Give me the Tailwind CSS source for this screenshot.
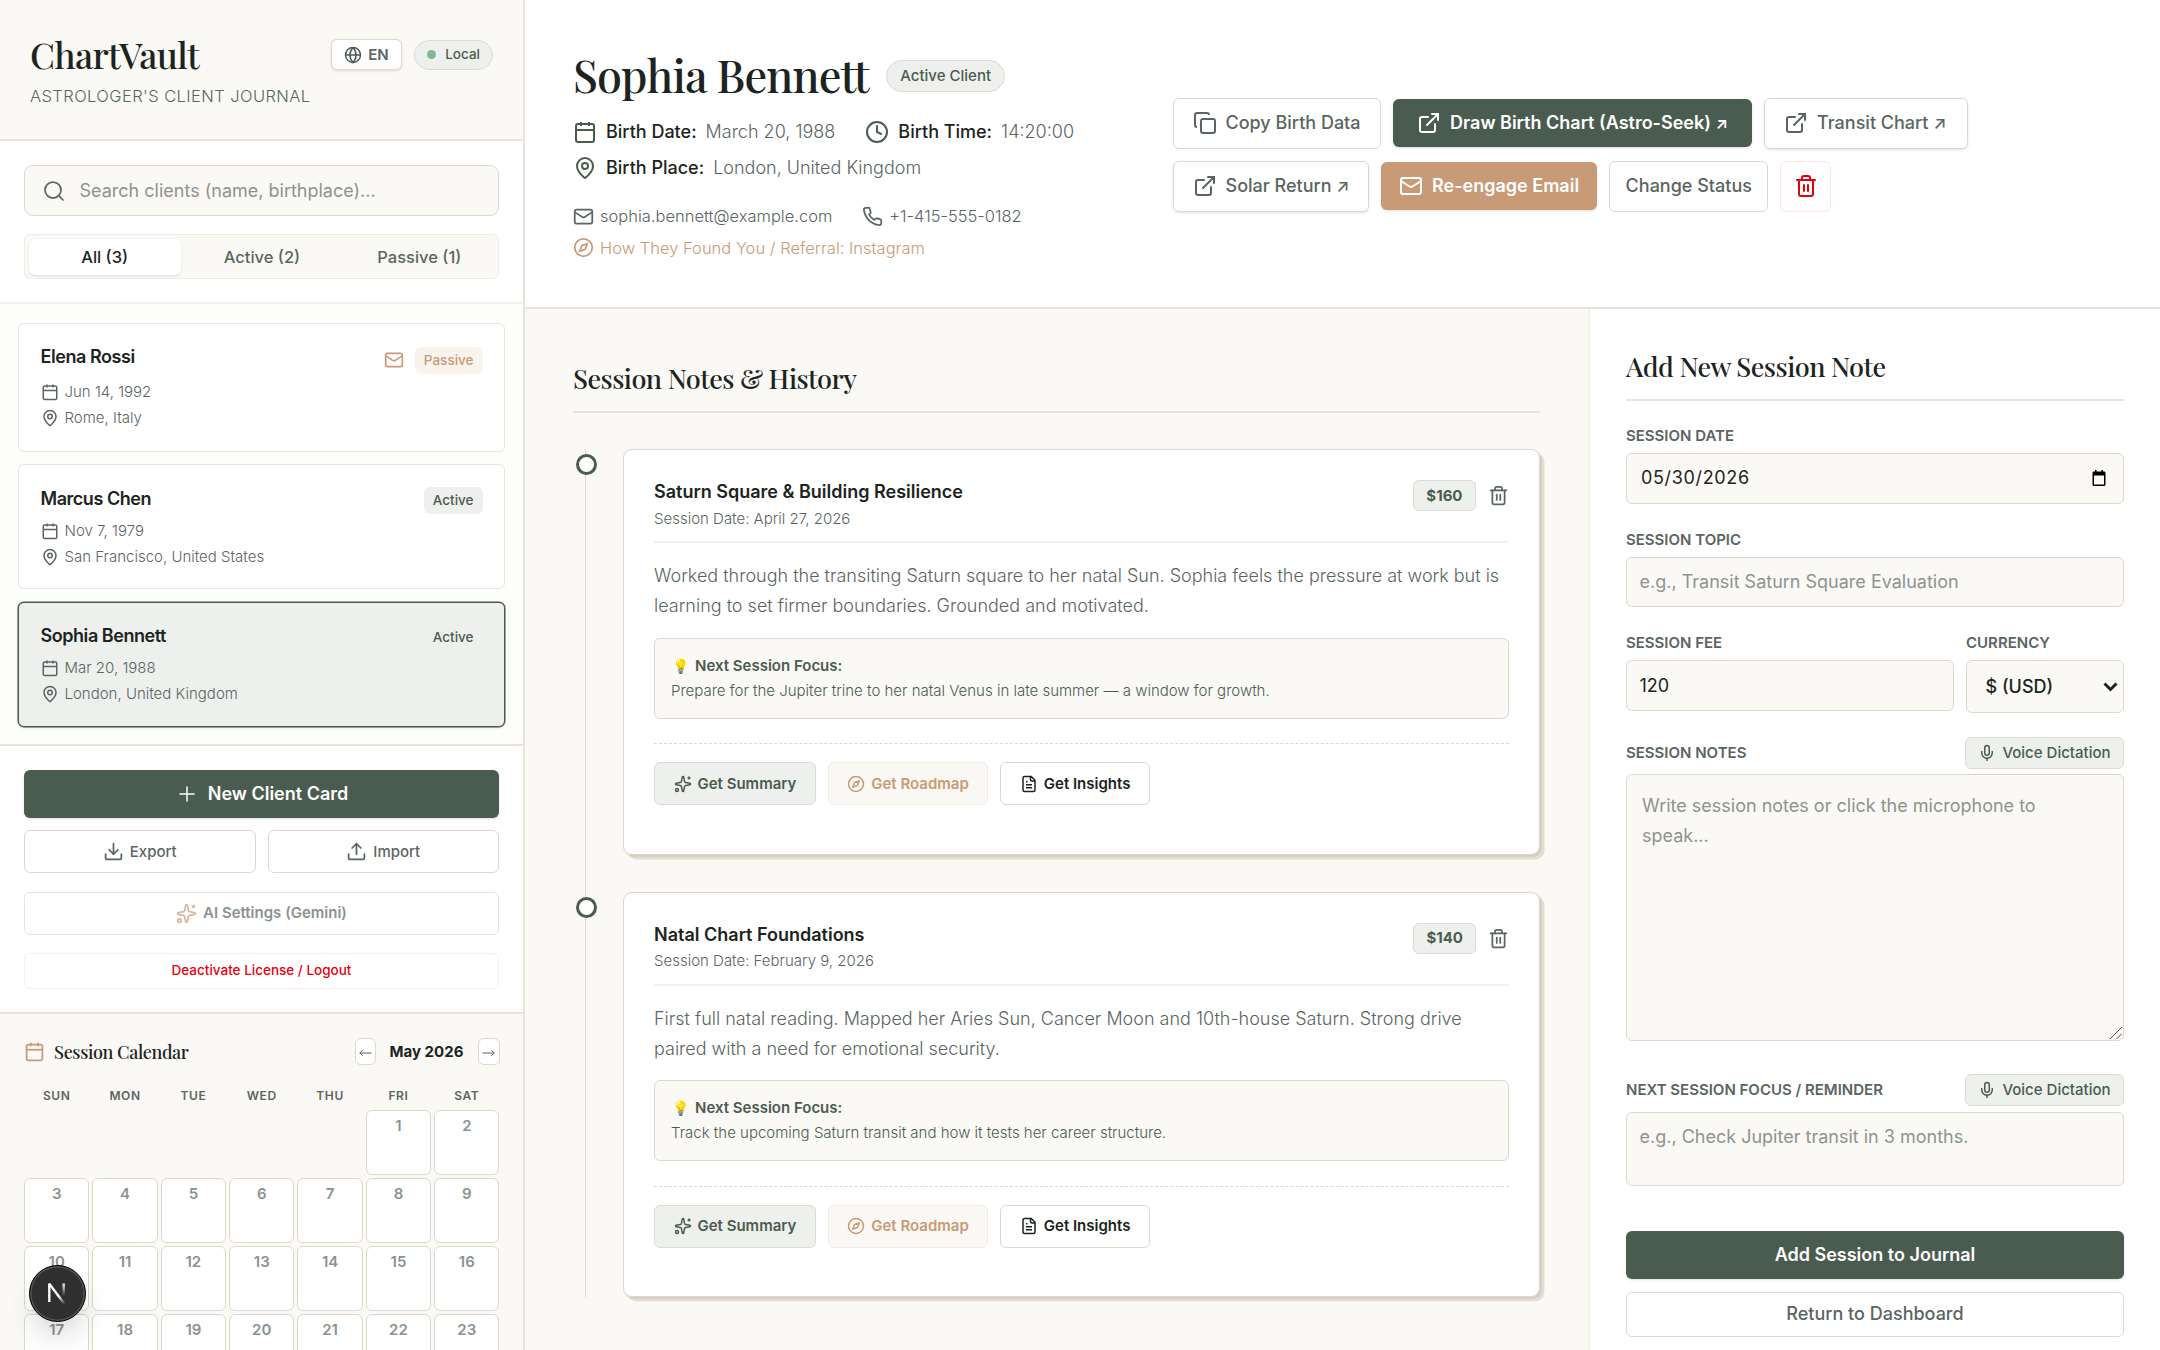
<!DOCTYPE html>
<html lang="en" class="text-[24px]">
<head>
    <meta charset="UTF-8">
    <meta name="viewport" content="width=device-width, initial-scale=1.0">
    <title>ChartVault - Astrologer's Client Journal</title>
    <script src="https://cdn.jsdelivr.net/npm/@tailwindcss/browser@4"></script>
</head>
<body class="h-[1350px] overflow-hidden bg-[#faf9f6] font-['Inter',sans-serif] text-xs text-[#1c2421]">

    <!-- icon set -->
    <svg class="hidden">
        <symbol id="globe" viewBox="0 0 24 24"><circle cx="12" cy="12" r="10"/><path d="M12 2a14.5 14.5 0 0 0 0 20 14.5 14.5 0 0 0 0-20"/><path d="M2 12h20"/></symbol>
        <symbol id="search" viewBox="0 0 24 24"><circle cx="11" cy="11" r="8"/><path d="m21 21-4.3-4.3"/></symbol>
        <symbol id="calendar" viewBox="0 0 24 24"><path d="M8 2v4"/><path d="M16 2v4"/><rect width="18" height="18" x="3" y="4" rx="2"/><path d="M3 10h18"/></symbol>
        <symbol id="pin" viewBox="0 0 24 24"><path d="M20 10c0 4.993-5.539 10.193-7.399 11.799a1 1 0 0 1-1.202 0C9.539 20.193 4 14.993 4 10a8 8 0 0 1 16 0"/><circle cx="12" cy="10" r="3"/></symbol>
        <symbol id="mail" viewBox="0 0 24 24"><path d="m22 7-8.991 5.727a2 2 0 0 1-2.009 0L2 7"/><rect x="2" y="4" width="20" height="16" rx="2"/></symbol>
        <symbol id="plus" viewBox="0 0 24 24"><path d="M5 12h14"/><path d="M12 5v14"/></symbol>
        <symbol id="download" viewBox="0 0 24 24"><path d="M12 15V3"/><path d="M21 15v4a2 2 0 0 1-2 2H5a2 2 0 0 1-2-2v-4"/><path d="m7 10 5 5 5-5"/></symbol>
        <symbol id="upload" viewBox="0 0 24 24"><path d="M12 3v12"/><path d="m17 8-5-5-5 5"/><path d="M21 15v4a2 2 0 0 1-2 2H5a2 2 0 0 1-2-2v-4"/></symbol>
        <symbol id="sparkles" viewBox="0 0 24 24"><path d="M11.017 2.814a1 1 0 0 1 1.966 0l1.051 5.558a2 2 0 0 0 1.594 1.594l5.558 1.051a1 1 0 0 1 0 1.966l-5.558 1.051a2 2 0 0 0-1.594 1.594l-1.051 5.558a1 1 0 0 1-1.966 0l-1.051-5.558a2 2 0 0 0-1.594-1.594l-5.558-1.051a1 1 0 0 1 0-1.966l5.558-1.051a2 2 0 0 0 1.594-1.594z"/><path d="M20 2v4"/><path d="M22 4h-4"/><circle cx="4" cy="20" r="2"/></symbol>
        <symbol id="clock" viewBox="0 0 24 24"><circle cx="12" cy="12" r="10"/><path d="M12 6v6l4 2"/></symbol>
        <symbol id="phone" viewBox="0 0 24 24"><path d="M22 16.92v3a2 2 0 0 1-2.18 2 19.79 19.79 0 0 1-8.63-3.07 19.5 19.5 0 0 1-6-6 19.79 19.79 0 0 1-3.07-8.67A2 2 0 0 1 4.11 2h3a2 2 0 0 1 2 1.72 12.84 12.84 0 0 0 .7 2.81 2 2 0 0 1-.45 2.11L8.09 9.91a16 16 0 0 0 6 6l1.27-1.27a2 2 0 0 1 2.11-.45 12.84 12.84 0 0 0 2.81.7A2 2 0 0 1 22 16.92z"/></symbol>
        <symbol id="compass" viewBox="0 0 24 24"><path d="m16.24 7.76-1.804 5.411a2 2 0 0 1-1.265 1.265L7.76 16.24l1.804-5.411a2 2 0 0 1 1.265-1.265z"/><circle cx="12" cy="12" r="10"/></symbol>
        <symbol id="copy" viewBox="0 0 24 24"><rect width="14" height="14" x="8" y="8" rx="2"/><path d="M4 16c-1.1 0-2-.9-2-2V4c0-1.1.9-2 2-2h10c1.1 0 2 .9 2 2"/></symbol>
        <symbol id="external" viewBox="0 0 24 24"><path d="M15 3h6v6"/><path d="M10 14 21 3"/><path d="M18 13v6a2 2 0 0 1-2 2H5a2 2 0 0 1-2-2V8a2 2 0 0 1 2-2h6"/></symbol>
        <symbol id="trash" viewBox="0 0 24 24"><path d="M10 11v6"/><path d="M14 11v6"/><path d="M19 6v14a2 2 0 0 1-2 2H7a2 2 0 0 1-2-2V6"/><path d="M3 6h18"/><path d="M8 6V4a2 2 0 0 1 2-2h4a2 2 0 0 1 2 2v2"/></symbol>
        <symbol id="file" viewBox="0 0 24 24"><path d="M15 2H6a2 2 0 0 0-2 2v16a2 2 0 0 0 2 2h12a2 2 0 0 0 2-2V7Z"/><path d="M14 2v4a2 2 0 0 0 2 2h4"/><path d="M10 9H8"/><path d="M16 13H8"/><path d="M16 17H8"/></symbol>
        <symbol id="mic" viewBox="0 0 24 24"><path d="M12 19v3"/><path d="M19 10v2a7 7 0 0 1-14 0v-2"/><rect x="9" y="2" width="6" height="13" rx="3"/></symbol>
    </svg>

    <div class="flex h-full">

        <!-- Sidebar -->
        <aside class="flex h-full w-[525px] shrink-0 flex-col overflow-hidden border-r-2 border-[#e8e4da] bg-white">

            <div class="h-[141px] shrink-0 border-b-2 border-[#e8e4da] bg-[#faf9f6] px-[30px] pt-[30px]">
                <div class="flex h-[48px] items-center justify-between">
                    <h1 class="font-['Playfair_Display','Liberation_Serif',serif] text-[36px] leading-[48px] font-medium tracking-[-0.02em]">ChartVault</h1>
                    <div class="mt-[1px] flex items-center gap-[12px]">
                        <button class="flex h-[31.5px] items-center gap-[6px] rounded border border-[#ddd8cb] bg-white px-[12.5px] text-[15px] font-semibold text-[#5a6562] shadow-sm">
                            <svg class="h-[18px] w-[18px] fill-none stroke-[#4a5c4f] stroke-2"><use href="#globe"/></svg>EN
                        </button>
                        <span class="flex h-[30px] items-center gap-[9px] rounded-full border border-[#dcdbd3] bg-[#eef0ed] px-[12px] text-[13.5px] font-medium text-[#4a5c4f]">
                            <span class="h-[9px] w-[9px] rounded-full bg-[#7fb896]"></span>Local
                        </span>
                    </div>
                </div>
                <p class="mt-[6px] text-[16.5px] leading-[24px] font-light tracking-wide text-[#5a6562]">ASTROLOGER'S CLIENT JOURNAL</p>
            </div>

            <div class="h-[163px] shrink-0 border-b-2 border-[#f3f1eb] p-[24px]">
                <div class="flex h-[51px] items-center rounded-[9px] border border-[#ddd8cb] bg-[#faf9f6] pl-[17px]">
                    <svg class="h-[24px] w-[24px] fill-none stroke-[#5a6562] stroke-[1.75]" stroke-linecap="round"><use href="#search"/></svg>
                    <input type="text" placeholder="Search clients (name, birthplace)..." class="ml-[13.5px] w-[380px] text-xs outline-none placeholder:text-[#8e9390]">
                </div>
                <div class="mt-[18px] grid h-[45px] grid-cols-3 gap-[5px] rounded border border-[#efece4] bg-[#faf9f6] p-[3.5px] pr-[2.5px] text-[16.5px] font-medium text-[#5a6562]">
                    <button class="rounded bg-white text-[#1c2421] shadow-sm">All (3)</button>
                    <button>Active (2)</button>
                    <button>Passive (1)</button>
                </div>
            </div>

            <!-- Client list -->
            <div class="flex h-[441.5px] shrink-0 flex-col gap-[12.5px] border-b-2 border-[#e8e4da] bg-[#fdfdfb] px-[18px] pt-[19px] text-[15px] leading-[22.5px] font-light text-[#5a6562]">
                <div class="rounded border border-[#e9e5db] bg-white p-[21.5px] pt-[21px]">
                    <div class="flex h-[30px] items-start justify-between">
                        <h3 class="text-xs leading-[24px] font-semibold tracking-tight text-[#1c2421]">Elena Rossi</h3>
                        <div class="flex h-full items-center gap-[10.5px]">
                            <svg class="h-[20px] w-[20px] fill-none stroke-[#c99a76] stroke-2"><use href="#mail"/></svg>
                            <span class="flex h-[27px] items-center rounded bg-[#f9f3ee] px-[9px] text-[13.5px] font-medium text-[#c99a76]">Passive</span>
                        </div>
                    </div>
                    <div class="mt-[6px] flex items-center gap-[6px]"><svg class="h-[18px] w-[18px] fill-none stroke-current stroke-2"><use href="#calendar"/></svg>Jun 14, 1992</div>
                    <div class="mt-[3px] flex items-center gap-[6px]"><svg class="h-[18px] w-[18px] fill-none stroke-current stroke-2"><use href="#pin"/></svg>Rome, Italy</div>
                </div>
                <div class="rounded border border-[#e9e5db] bg-white p-[21.5px] pb-[20px]">
                    <div class="flex h-[27px] items-start justify-between">
                        <h3 class="text-xs leading-[24px] font-semibold tracking-tight text-[#1c2421]">Marcus Chen</h3>
                        <span class="flex h-[27px] items-center rounded bg-[#eef0ed] px-[9px] text-[13.5px] font-medium text-[#4a5c4f]">Active</span>
                    </div>
                    <div class="mt-[6.5px] flex items-center gap-[6px]"><svg class="h-[18px] w-[18px] fill-none stroke-current stroke-2"><use href="#calendar"/></svg>Nov 7, 1979</div>
                    <div class="mt-[3px] flex items-center gap-[6px]"><svg class="h-[18px] w-[18px] fill-none stroke-current stroke-2"><use href="#pin"/></svg>San Francisco, United States</div>
                </div>
                <div class="rounded border border-[#4a5c4f] bg-[#eef0ed] p-[21.5px] pb-[20.5px] shadow-sm ring-[0.5px] ring-[#4a5c4f]">
                    <div class="flex h-[27px] items-start justify-between">
                        <h3 class="text-xs leading-[24px] font-semibold tracking-tight text-[#1c2421]">Sophia Bennett</h3>
                        <span class="flex h-[27px] items-center rounded bg-[#eef0ed] px-[9px] text-[13.5px] font-medium text-[#4a5c4f]">Active</span>
                    </div>
                    <div class="mt-[6px] flex items-center gap-[6px]"><svg class="h-[18px] w-[18px] fill-none stroke-current stroke-2"><use href="#calendar"/></svg>Mar 20, 1988</div>
                    <div class="mt-[3px] flex items-center gap-[6px]"><svg class="h-[18px] w-[18px] fill-none stroke-current stroke-2"><use href="#pin"/></svg>London, United Kingdom</div>
                </div>
            </div>

            <!-- Sidebar actions -->
            <div class="h-[268px] shrink-0 border-b-2 border-[#e8e4da] px-[24px] pt-[24px] text-[15px] font-medium text-[#5a6562]">
                <button class="flex h-[48px] w-full items-center justify-center gap-[9px] rounded bg-[#4a5c4f] text-xs font-semibold text-white shadow-sm">
                    <svg class="h-[24px] w-[24px] fill-none stroke-current stroke-[1.5]" stroke-linecap="round"><use href="#plus"/></svg>New Client Card
                </button>
                <div class="mt-[12.5px] grid grid-cols-2 gap-[12px]">
                    <button class="flex h-[43px] items-center justify-center gap-[6px] rounded border border-[#ddd8cb]"><svg class="h-[21px] w-[21px] fill-none stroke-current stroke-2" stroke-linecap="round"><use href="#download"/></svg>Export</button>
                    <button class="flex h-[43px] items-center justify-center gap-[6px] rounded border border-[#ddd8cb]"><svg class="h-[21px] w-[21px] fill-none stroke-current stroke-2" stroke-linecap="round"><use href="#upload"/></svg>Import</button>
                </div>
                <button class="mt-[18.5px] flex h-[43px] w-full items-center justify-center gap-[6px] rounded border border-[#ddd8cb] font-semibold opacity-70"><svg class="h-[21px] w-[21px] fill-none stroke-[#c99a76] stroke-2"><use href="#sparkles"/></svg>AI Settings (Gemini)</button>
                <button class="mt-[18.5px] h-[36px] w-full rounded border border-[#ffecec] text-[13.5px] text-[#e7000b]">Deactivate License / Logout</button>
            </div>

            <!-- Calendar -->
            <div class="flex-1 bg-[#faf9f6] pt-[24px] pr-[23.5px] pl-[24px]">
                <div class="flex h-[28px] items-center justify-between">
                    <div class="flex items-center gap-[9px]">
                        <svg class="h-[21px] w-[21px] fill-none stroke-[#c99a76] stroke-2"><use href="#calendar"/></svg>
                        <h3 class="font-['Playfair_Display','Liberation_Serif',serif] text-xs font-medium tracking-[-0.02em]">Session Calendar</h3>
                    </div>
                    <div class="flex items-center">
                        <button class="flex h-[27px] w-[21px] items-center justify-center rounded border border-[#ddd8cb] bg-white pt-[2px] font-['Liberation_Sans',sans-serif] text-[13.5px] text-[#5a6562]"><svg class="h-[8px] w-[13px] shrink-0 fill-none stroke-current" viewBox="0 0 13 8"><path d="M.8 4h11.700M3.800 1.200.8 4l3 2.800"/></svg></button>
                        <span class="w-[102px] text-center text-[15px] font-bold">May 2026</span>
                        <button class="flex h-[27px] w-[22px] items-center justify-center rounded border border-[#ddd8cb] bg-white pt-[2px] font-['Liberation_Sans',sans-serif] text-[13.5px] text-[#5a6562]"><svg class="h-[8px] w-[13px] shrink-0 fill-none stroke-current" viewBox="0 0 13 8"><path d="M.5 4h11.700M9.200 1.200l3 2.800-3 2.800"/></svg></button>
                    </div>
                </div>
                <div class="mt-[21.5px] grid grid-cols-7 gap-[3px] text-center text-[12px] leading-[18px] font-semibold tracking-wider text-[#5a6562]">
                    <span>SUN</span><span>MON</span><span>TUE</span><span>WED</span><span>THU</span><span>FRI</span><span>SAT</span>
                </div>
                <div id="days" class="mt-[4.5px] grid grid-cols-7 gap-[3px]"></div>
            </div>
        </aside>

        <div class="flex flex-1 flex-col">

            <!-- Client header -->
            <header class="flex h-[309px] shrink-0 items-center border-b-2 border-[#e8e4da] bg-white px-[48px] pt-[2px]">
                <div class="w-[600px] shrink-0">
                    <div class="flex h-[54px] items-center gap-[17.5px]">
                        <h2 class="mb-[3.5px] font-['Playfair_Display','Liberation_Serif',serif] text-[45px] leading-[54px] font-medium tracking-[-0.02em]">Sophia Bennett</h2>
                        <span class="flex h-[31.5px] items-center rounded-full border border-[#dcdbd3] bg-[#eef0ed] px-[13px] text-[15px] font-medium text-[#4a5c4f]">Active Client</span>
                    </div>
                    <div class="mt-[15.5px] flex flex-wrap gap-x-[30px] gap-y-[9px] leading-[27px]">
                        <div class="flex items-center"><svg class="mr-[9px] h-[24px] w-[24px] fill-none stroke-[#4a5c4f] stroke-2"><use href="#calendar"/></svg><span class="mr-[9px] font-medium">Birth Date:</span><span class="font-light text-[#5a6562]">March 20, 1988</span></div>
                        <div class="flex items-center"><svg class="mr-[9px] h-[24px] w-[24px] fill-none stroke-[#4a5c4f] stroke-2" stroke-linecap="round"><use href="#clock"/></svg><span class="mr-[9px] font-medium">Birth Time:</span><span class="font-light text-[#5a6562]">14:20:00</span></div>
                        <div class="flex w-full items-center"><svg class="mr-[9px] h-[24px] w-[24px] fill-none stroke-[#4a5c4f] stroke-2"><use href="#pin"/></svg><span class="mr-[9px] font-medium">Birth Place:</span><span class="font-light text-[#5a6562]">London, United Kingdom</span></div>
                    </div>
                    <div class="mt-[22.5px] flex flex-wrap gap-x-[30px] gap-y-[7px] text-[16.5px] leading-[24.75px] font-light text-[#5a6562]">
                        <div class="flex items-center gap-[6px]"><svg class="h-[21px] w-[21px] fill-none stroke-current stroke-2"><use href="#mail"/></svg>sophia.bennett@example.com</div>
                        <div class="flex items-center gap-[6px]"><svg class="h-[21px] w-[21px] fill-none stroke-current stroke-2" stroke-linejoin="round"><use href="#phone"/></svg>+1-415-555-0182</div>
                        <div class="flex w-full items-center gap-[6px] text-[#c99a76]"><svg class="h-[21px] w-[21px] fill-none stroke-current stroke-2"><use href="#compass"/></svg>How They Found You / Referral: Instagram</div>
                    </div>
                </div>
                <div class="flex flex-1 flex-wrap items-center gap-[12px] font-medium text-[#5a6562]">
                    <button class="flex h-[51px] items-center gap-[9px] rounded border border-[#ddd8cb] px-[18.5px] pr-[19.5px]"><svg class="h-[24px] w-[24px] fill-none stroke-current stroke-2"><use href="#copy"/></svg>Copy Birth Data</button>
                    <button class="flex h-[48px] items-center gap-[9px] rounded bg-[#4a5c4f] pr-[24.5px] pl-[24px] font-semibold text-white shadow-sm"><svg class="h-[24px] w-[24px] fill-none stroke-current stroke-2" stroke-linecap="round"><use href="#external"/></svg><span>Draw Birth Chart (Astro-Seek) <span class="text-[16px]">↗</span></span></button>
                    <button class="flex h-[51px] items-center gap-[9px] rounded border border-[#ddd8cb] px-[18.5px] pr-[20.5px] shadow-sm"><svg class="h-[24px] w-[24px] fill-none stroke-current stroke-2" stroke-linecap="round"><use href="#external"/></svg><span>Transit Chart <span class="text-[17px]">↗</span></span></button>
                    <button class="flex h-[51px] items-center gap-[9px] rounded border border-[#ddd8cb] px-[18.5px] shadow-sm"><svg class="h-[24px] w-[24px] fill-none stroke-current stroke-2" stroke-linecap="round"><use href="#external"/></svg><span>Solar Return <span class="text-[17px]">↗</span></span></button>
                    <button class="flex h-[48px] items-center gap-[9px] rounded bg-[#c99a76] px-[18px] font-semibold text-white shadow-sm"><svg class="h-[24px] w-[24px] fill-none stroke-current stroke-2"><use href="#mail"/></svg>Re-engage Email</button>
                    <button class="h-[51px] rounded border border-[#ddd8cb] px-[15.5px]">Change Status</button>
                    <button class="flex h-[51px] items-center rounded border border-[#ffe2e2] px-[12.5px]"><svg class="h-[24px] w-[24px] fill-none stroke-[#e7000b] stroke-2" stroke-linecap="round"><use href="#trash"/></svg></button>
                </div>
            </header>

            <div class="flex flex-1">

                <!-- Session history -->
                <main class="flex-1 px-[48px] pt-[48.5px]">
                    <h2 class="mb-[36px] border-b-2 border-[#e8e4da] pb-[13px] font-['Playfair_Display','Liberation_Serif',serif] text-[27px] leading-[40.5px] font-medium tracking-[-0.02em]">Session Notes &amp; History</h2>

                    <div class="relative flex flex-col gap-[37px] pl-[50px]">
                        <div class="absolute top-0 bottom-0 left-[12px] w-px bg-[#ddd8cb]"></div>

                        <article class="relative h-[405.5px] rounded-[9px] border border-[#ddd8cb] bg-white px-[30px] pt-[30px] shadow-[1.5px_1.5px_1.5px_rgba(120,110,90,0.15),4.5px_4.5px_0_#e5e0d6]">
                            <span class="absolute top-[4px] -left-[48px] h-[21px] w-[21px] rounded-full border-[3px] border-[#4a5c4f] bg-white"></span>
                            <div class="flex h-[63px] items-start justify-between border-b-2 border-[#f3f1eb]">
                                <div>
                                    <h3 class="leading-[24.5px] font-semibold">Saturn Square &amp; Building Resilience</h3>
                                    <p class="mt-[3px] text-[15px] leading-[22.5px] font-light text-[#5a6562]">Session Date: April 27, 2026</p>
                                </div>
                                <div class="flex items-center gap-[12px]">
                                    <span class="flex h-[31px] items-center rounded border border-[#dcdbd3] bg-[#eef0ed] px-[12.5px] text-[15px] font-bold text-[#4a5c4f]">$160</span>
                                    <svg class="h-[21px] w-[21px] fill-none stroke-[#5a6562] stroke-2" stroke-linecap="round"><use href="#trash"/></svg>
                                </div>
                            </div>
                            <p class="mt-[18px] leading-[30px] font-light text-[#5a6562]">Worked through the transiting Saturn square to her natal Sun. Sophia feels the pressure at work but is learning to set firmer boundaries. Grounded and motivated.</p>
                            <div class="mt-[16.5px] h-[81px] rounded border border-[#ddd8cb] bg-[#faf9f6] px-[16px] pt-[14px] text-[15px] text-[#4a5c4f]">
                                <p class="flex leading-[25px] font-semibold"><span class="mr-[5px] w-[19px] text-center text-[14px]">💡</span>Next Session Focus:</p>
                                <p class="leading-[25px] font-light">Prepare for the Jupiter trine to her natal Venus in late summer — a window for growth.</p>
                            </div>
                            <div class="mt-[24.5px] flex gap-[12px] border-t border-dashed border-[#ddd8cb] pt-[18px] text-[15px] font-semibold">
                                <button class="flex h-[43px] items-center gap-[6px] rounded border border-[#dcdbd3] bg-[#eef0ed] px-[18.5px] text-[#4a5c4f]"><svg class="h-[18px] w-[18px] fill-none stroke-current stroke-2"><use href="#sparkles"/></svg>Get Summary</button>
                                <button class="flex h-[43px] items-center gap-[6px] rounded border border-[#f5ebe3] bg-[#faf8f5] px-[18.5px] text-[#c99a76]"><svg class="h-[18px] w-[18px] fill-none stroke-current stroke-2"><use href="#compass"/></svg>Get Roadmap</button>
                                <button class="flex h-[43px] items-center gap-[6px] rounded border border-[#ddd8cb] px-[18.5px]"><svg class="h-[18px] w-[18px] fill-none stroke-current stroke-2"><use href="#file"/></svg>Get Insights</button>
                            </div>
                        </article>

                        <article class="relative h-[405.5px] rounded-[9px] border border-[#ddd8cb] bg-white px-[30px] pt-[30px] shadow-[1.5px_1.5px_1.5px_rgba(120,110,90,0.15),4.5px_4.5px_0_#e5e0d6]">
                            <span class="absolute top-[4px] -left-[48px] h-[21px] w-[21px] rounded-full border-[3px] border-[#4a5c4f] bg-white"></span>
                            <div class="flex h-[63px] items-start justify-between border-b-2 border-[#f3f1eb]">
                                <div>
                                    <h3 class="leading-[24.5px] font-semibold">Natal Chart Foundations</h3>
                                    <p class="mt-[3px] text-[15px] leading-[22.5px] font-light text-[#5a6562]">Session Date: February 9, 2026</p>
                                </div>
                                <div class="flex items-center gap-[12px]">
                                    <span class="flex h-[31px] items-center rounded border border-[#dcdbd3] bg-[#eef0ed] px-[12px] text-[15px] font-bold text-[#4a5c4f]">$140</span>
                                    <svg class="h-[21px] w-[21px] fill-none stroke-[#5a6562] stroke-2" stroke-linecap="round"><use href="#trash"/></svg>
                                </div>
                            </div>
                            <p class="mt-[18px] leading-[30px] font-light text-[#5a6562]">First full natal reading. Mapped her Aries Sun, Cancer Moon and 10th-house Saturn. Strong drive paired with a need for emotional security.</p>
                            <div class="mt-[16.5px] h-[81px] rounded border border-[#ddd8cb] bg-[#faf9f6] px-[16px] pt-[14px] text-[15px] text-[#4a5c4f]">
                                <p class="flex leading-[25px] font-semibold"><span class="mr-[5px] w-[19px] text-center text-[14px]">💡</span>Next Session Focus:</p>
                                <p class="leading-[25px] font-light">Track the upcoming Saturn transit and how it tests her career structure.</p>
                            </div>
                            <div class="mt-[24.5px] flex gap-[12px] border-t border-dashed border-[#ddd8cb] pt-[18px] text-[15px] font-semibold">
                                <button class="flex h-[43px] items-center gap-[6px] rounded border border-[#dcdbd3] bg-[#eef0ed] px-[18.5px] text-[#4a5c4f]"><svg class="h-[18px] w-[18px] fill-none stroke-current stroke-2"><use href="#sparkles"/></svg>Get Summary</button>
                                <button class="flex h-[43px] items-center gap-[6px] rounded border border-[#f5ebe3] bg-[#faf8f5] px-[18.5px] text-[#c99a76]"><svg class="h-[18px] w-[18px] fill-none stroke-current stroke-2"><use href="#compass"/></svg>Get Roadmap</button>
                                <button class="flex h-[43px] items-center gap-[6px] rounded border border-[#ddd8cb] px-[18.5px]"><svg class="h-[18px] w-[18px] fill-none stroke-current stroke-2"><use href="#file"/></svg>Get Insights</button>
                            </div>
                        </article>
                    </div>
                </main>

                <!-- New session form -->
                <section class="w-[572px] shrink-0 border-l-2 border-[#f3f1eb] bg-white px-[36px] pt-[36.5px]">
                    <h2 class="border-b-2 border-[#e8e4da] pb-[13px] font-['Playfair_Display','Liberation_Serif',serif] text-[27px] leading-[40.5px] font-medium tracking-[-0.02em]">Add New Session Note</h2>

                    <div class="mt-[24px] text-[15px] leading-[22.5px] font-semibold text-[#5a6562]">SESSION DATE</div>
                    <div class="mt-[5.5px] flex h-[50.5px] items-center justify-between rounded border border-[#ddd8cb] bg-[#faf9f6] pr-[17px] pl-[14px]">
                        <span class="tracking-[0.036em]">05/30/2026</span>
                        <svg class="h-[16px] w-[14px]" viewBox="0 0 14 16"><path d="M2 1.5h1V0h1.500v1.500h5V0H11v1.500h1c.9 0 1.500.6 1.500 1.500v11.500c0 .8-.6 1.500-1.500 1.500H2c-.9 0-1.500-.7-1.500-1.500V3c0-.9.6-1.500 1.500-1.500zM2 5.500v9h10v-9z" fill="#000" fill-rule="evenodd"/></svg>
                    </div>

                    <div class="mt-[25px] text-[15px] leading-[22.5px] font-semibold text-[#5a6562]">SESSION TOPIC</div>
                    <input type="text" placeholder="e.g., Transit Saturn Square Evaluation" class="mt-[5.5px] block h-[50.5px] w-full rounded border border-[#ddd8cb] bg-[#faf9f6] px-[12.5px] placeholder:text-[#8e9390]">

                    <div class="mt-[24.5px] grid grid-cols-3 gap-[12px]">
                        <div class="col-span-2">
                            <div class="text-[15px] leading-[22.5px] font-semibold text-[#5a6562]">SESSION FEE</div>
                            <input type="text" value="120" class="mt-[6px] block h-[51px] w-full rounded border border-[#ddd8cb] bg-[#faf9f6] px-[12.5px]">
                        </div>
                        <div>
                            <div class="text-[15px] leading-[22.5px] font-semibold text-[#5a6562]">CURRENCY</div>
                            <div class="mt-[6px] flex h-[52.5px] items-center justify-between rounded border border-[#ddd8cb] bg-[#faf9f6] pt-[1px] pr-[5px] pl-[18.5px] font-medium">
                                $ (USD)
                                <svg class="h-[10px] w-[15px] fill-none stroke-[#1c2421] stroke-[3]" viewBox="0 0 15 10"><path d="m1.5 1.5 6 6 6-6"/></svg>
                            </div>
                        </div>
                    </div>

                    <div class="mt-[24.5px] flex h-[31.5px] items-center justify-between text-[15px]">
                        <span class="font-semibold text-[#5a6562]">SESSION NOTES</span>
                        <button class="flex h-full items-center gap-[6px] rounded border border-[#dcdbd3] bg-[#eef0ed] px-[12.5px] font-medium text-[#4a5c4f]"><svg class="h-[18px] w-[18px] fill-none stroke-current stroke-2" stroke-linecap="round"><use href="#mic"/></svg>Voice Dictation</button>
                    </div>
                    <div class="relative mt-[5.5px]">
                        <textarea placeholder="Write session notes or click the microphone to speak..." class="block h-[267px] w-full resize-none rounded border border-[#ddd8cb] bg-[#faf9f6] pt-[16px] pr-[36px] pl-[15px] leading-[30px] placeholder:text-[#8e9390]"></textarea>
                        <svg class="absolute right-[2px] bottom-[2px] h-[12px] w-[12px] stroke-[#555] stroke-1" viewBox="0 0 12 12"><path d="M0 12 12 0M6.5 12 12 6.5"/></svg>
                    </div>

                    <div class="mt-[33px] flex h-[31.5px] items-center justify-between text-[15px]">
                        <span class="font-semibold text-[#5a6562]">NEXT SESSION FOCUS / REMINDER</span>
                        <button class="flex h-full items-center gap-[6px] rounded border border-[#dcdbd3] bg-[#eef0ed] px-[12.5px] font-medium text-[#4a5c4f]"><svg class="h-[18px] w-[18px] fill-none stroke-current stroke-2" stroke-linecap="round"><use href="#mic"/></svg>Voice Dictation</button>
                    </div>
                    <textarea placeholder="e.g., Check Jupiter transit in 3 months." class="mt-[6px] block h-[74.5px] w-full resize-none rounded border border-[#ddd8cb] bg-[#faf9f6] px-[12.5px] py-[12px] leading-[24px] placeholder:text-[#8e9390]"></textarea>

                    <button class="mt-[45px] h-[48px] w-full rounded bg-[#4a5c4f] font-semibold text-white shadow-sm">Add Session to Journal</button>
                    <button class="mt-[12.5px] h-[45px] w-full rounded border border-[#ddd8cb] font-medium text-[#5a6562]">Return to Dashboard</button>
                </section>
            </div>
        </div>
    </div>

    <!-- Next.js dev badge -->
    <div class="fixed bottom-[28.5px] left-[28.5px] flex h-[57px] w-[57px] items-center justify-center rounded-full border-[1.5px] border-black bg-[#2f2f2f] shadow-[inset_0_0_0_1.5px_#555,0_16px_32px_-8px_rgba(0,0,0,0.24)]">
        <svg class="h-[22px] w-[20px]" viewBox="0 0 20 22" fill="none">
            <defs>
                <linearGradient id="fadeA" x1="12" y1="14" x2="18" y2="22" gradientUnits="userSpaceOnUse"><stop stop-color="#fff"/><stop offset="1" stop-color="#fff" stop-opacity="0"/></linearGradient>
                <linearGradient id="fadeB" x1="0" y1="1" x2="0" y2="14" gradientUnits="userSpaceOnUse"><stop stop-color="#fff"/><stop offset="1" stop-color="#fff" stop-opacity="0"/></linearGradient>
            </defs>
            <path d="M2.3 20V1.5" stroke="#fff" stroke-width="2.4"/>
            <path d="M2.3 1.8 17.5 22" stroke="url(#fadeA)" stroke-width="2.4"/>
            <path d="M15.5 1.5h2.400V14h-2.400z" fill="url(#fadeB)"/>
        </svg>
    </div>

    <script>
        // May 2026 starts on a Friday
        const days = document.getElementById('days');
        let html = '<span class="col-span-5"></span>';
        for (let d = 1; d <= 31; d++) {
            html += `<div class="h-[65.3px] rounded border border-[#ddd8cb] bg-white pt-[4px] text-center text-[15px] leading-[22.5px] font-semibold text-[#8b938f]">${d}</div>`;
        }
        days.innerHTML = html;
    </script>
</body>
</html>
